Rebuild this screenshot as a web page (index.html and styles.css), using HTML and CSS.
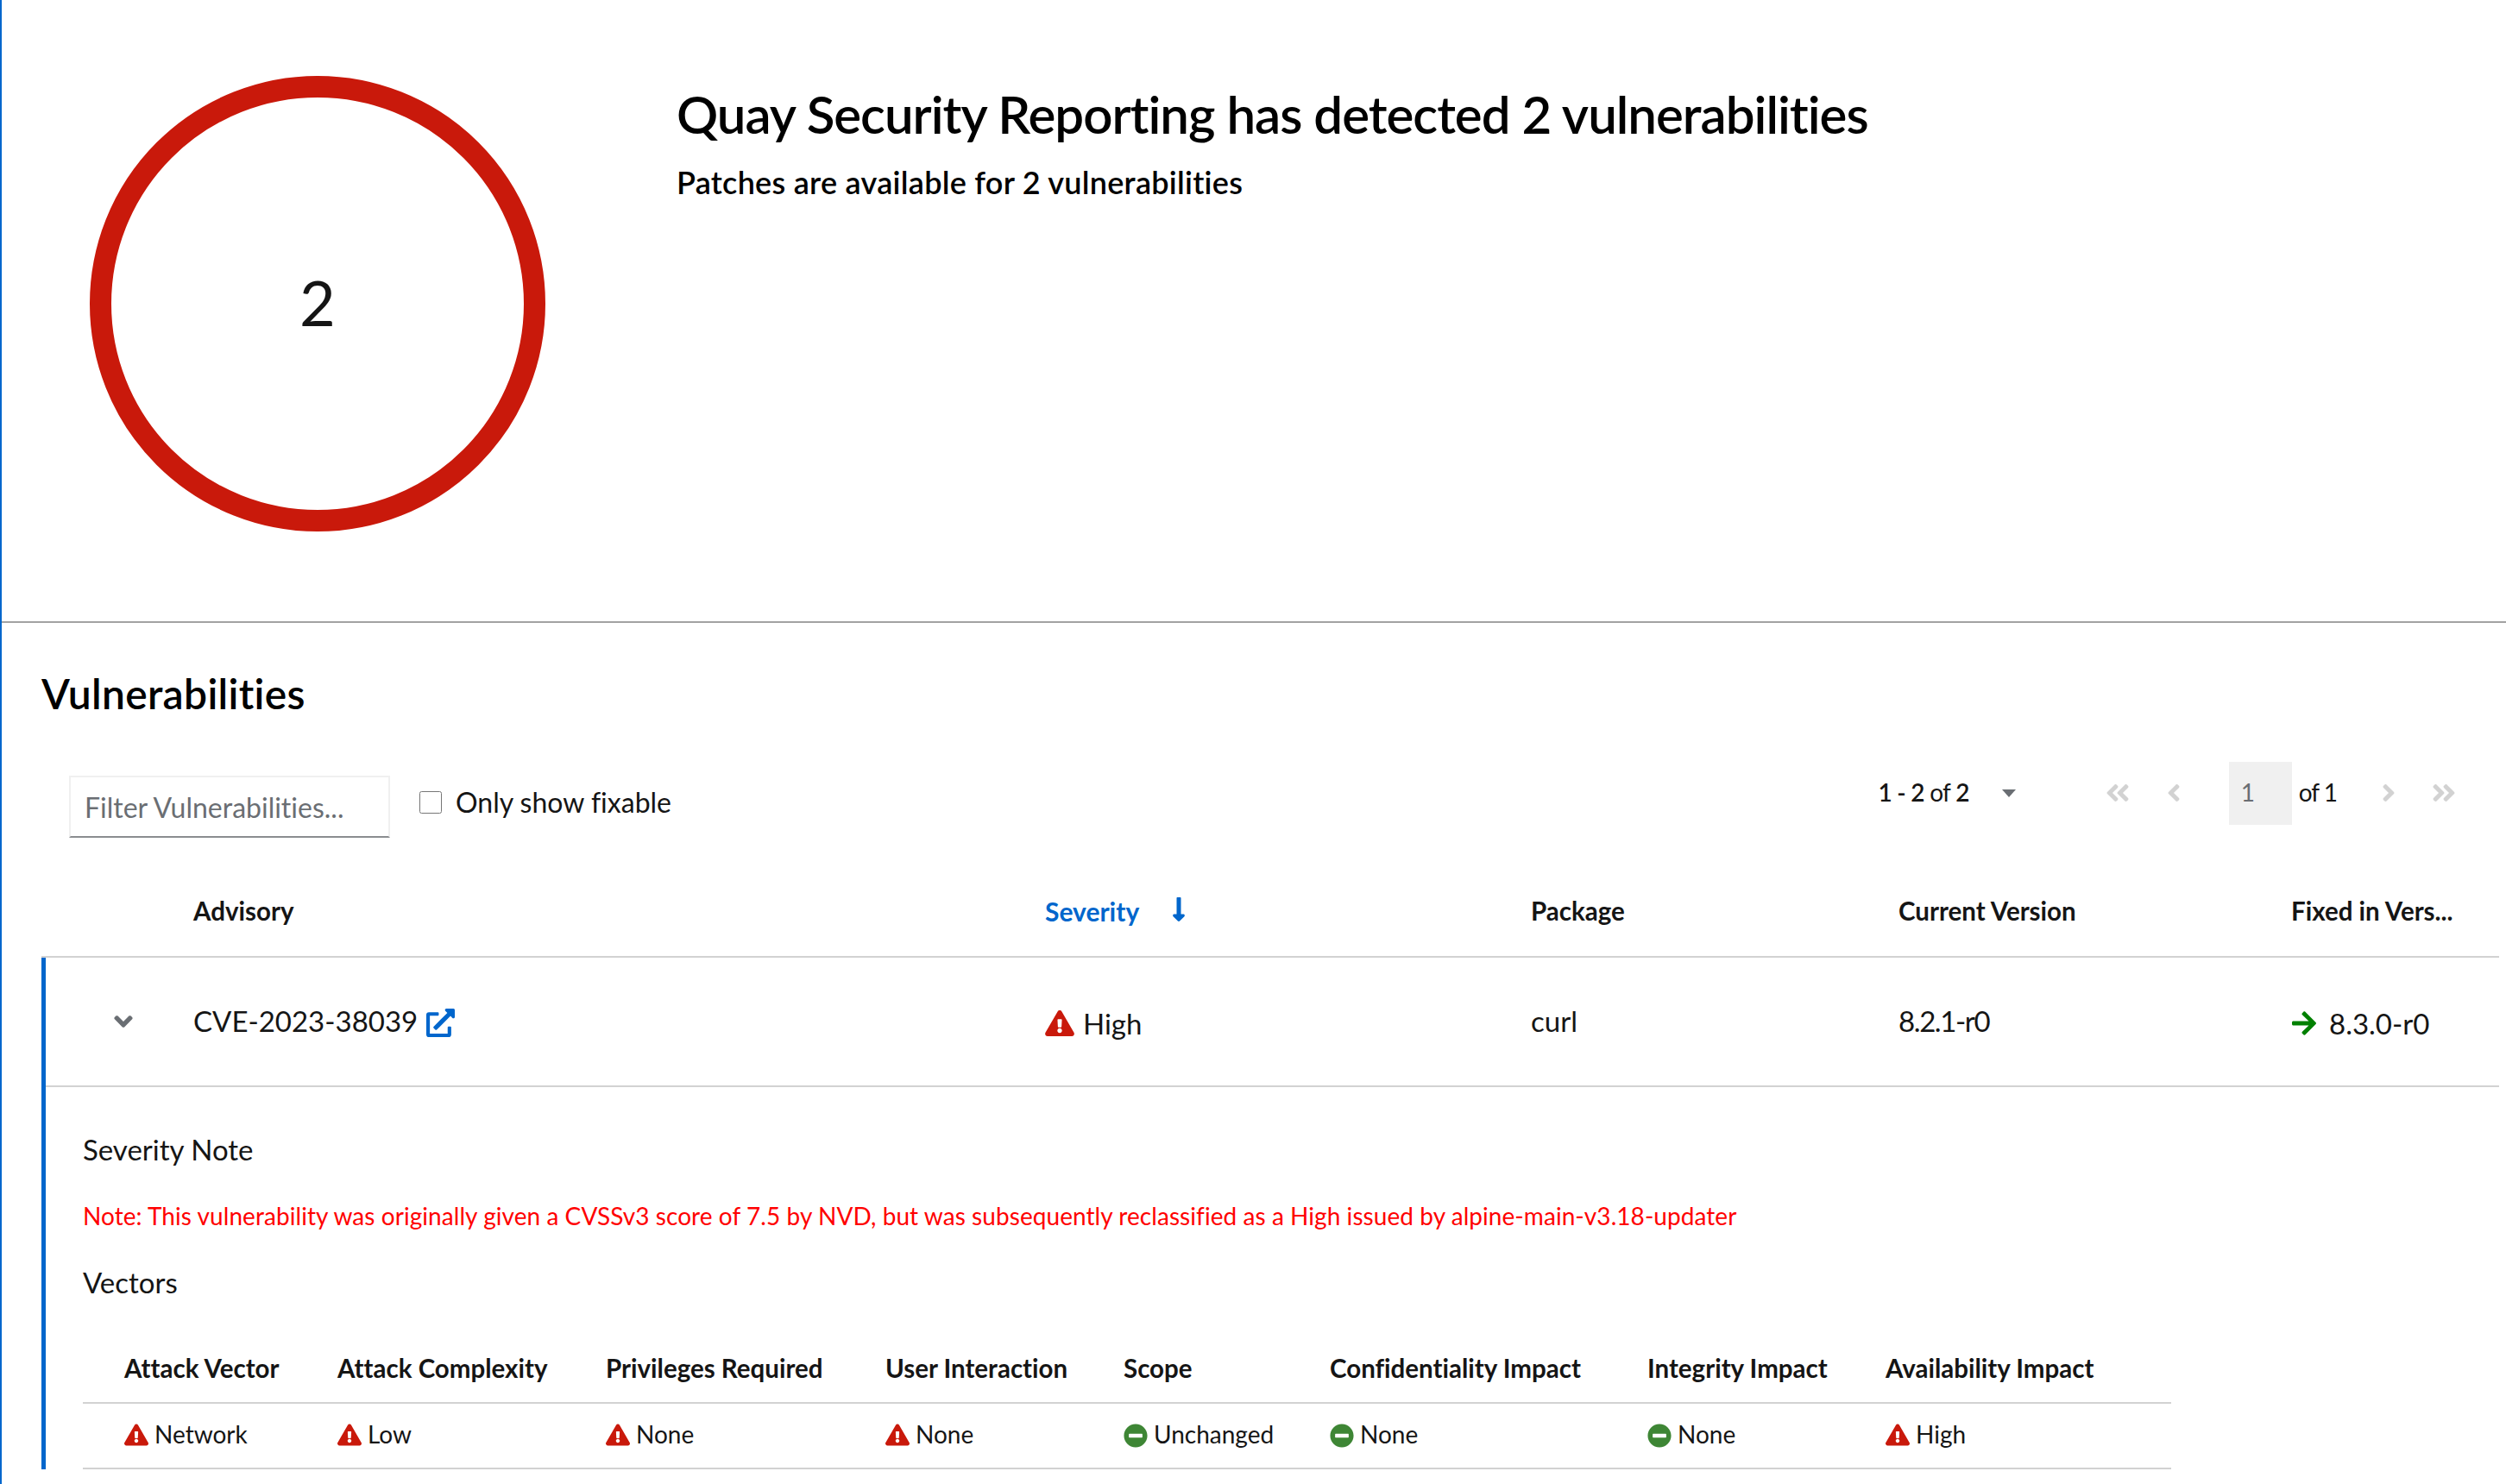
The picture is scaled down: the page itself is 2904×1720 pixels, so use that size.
FILE: index.html
```html
<!DOCTYPE html>
<html lang="en">
<head>
    <meta charset="UTF-8">
    <title>Quay Security Reporting</title>
    <link rel="stylesheet" href="styles.css">
</head>
<body>
    <svg class="icon-defs" aria-hidden="true">
        <symbol id="i-warn" viewBox="0 0 576 512"><path d="M569.517 440.013C587.975 472.007 564.806 512 527.94 512H48.054c-36.937 0-59.999-40.055-41.577-71.987L246.423 24.028c18.467-32.009 64.72-31.951 83.154 0l239.94 416zM288 354c-25.405 0-46 20.595-46 46s20.595 46 46 46 46-20.595 46-46-20.595-46-46-46zm-43.673-165.346l7.418 136c.347 6.364 5.609 11.346 11.982 11.346h48.546c6.373 0 11.635-4.982 11.982-11.346l7.418-136c.375-6.874-5.098-12.654-11.982-12.654h-63.383c-6.884 0-12.356 5.78-11.981 12.654z"/></symbol>
        <symbol id="i-minus" viewBox="0 0 512 512"><path d="M256 8C119 8 8 119 8 256s111 248 248 248 248-111 248-248S393 8 256 8zM124 296c-6.6 0-12-5.4-12-12v-56c0-6.6 5.4-12 12-12h264c6.6 0 12 5.4 12 12v56c0 6.6-5.4 12-12 12H124z"/></symbol>
        <symbol id="i-double" viewBox="0 0 448 512"><path d="M223.7 239l136-136c9.4-9.4 24.6-9.4 33.9 0l22.6 22.6c9.4 9.4 9.4 24.6 0 33.9L319.9 256l96.4 96.4c9.4 9.4 9.4 24.6 0 33.9L393.7 409c-9.4 9.4-24.6 9.4-33.9 0l-136-136c-9.5-9.4-9.5-24.6-.1-34zm-192 34l136 136c9.4 9.4 24.6 9.4 33.9 0l22.6-22.6c9.4-9.4 9.4-24.6 0-33.9L127.9 256l96.4-96.4c9.4-9.4 9.4-24.6 0-33.9L201.7 103c-9.4-9.4-24.6-9.4-33.9 0l-136 136c-9.5 9.4-9.5 24.6-.1 34z"/></symbol>
        <symbol id="i-single" viewBox="0 0 256 512"><path d="M31.7 239l136-136c9.4-9.4 24.6-9.4 33.9 0l22.6 22.6c9.4 9.4 9.4 24.6 0 33.9L127.9 256l96.4 96.4c9.4 9.4 9.4 24.6 0 33.9L201.7 409c-9.4 9.4-24.6 9.4-33.9 0l-136-136c-9.5-9.4-9.5-24.6-.1-34z"/></symbol>
    </svg>

    <section class="summary">
        <div class="donut">
            <svg viewBox="0 0 528 528" width="528" height="528"><circle cx="264" cy="264" r="251.5" fill="none" stroke="#c9190b" stroke-width="25"/></svg>
            <span class="donut-count">2</span>
        </div>
        <div class="summary-text">
            <h1>Quay Security Reporting has detected 2 vulnerabilities</h1>
            <h2>Patches are available for 2 vulnerabilities</h2>
        </div>
    </section>

    <section class="vulns">
        <h3 class="vulns-title">Vulnerabilities</h3>

        <div class="toolbar">
            <input class="filter" type="text" placeholder="Filter Vulnerabilities...">
            <label class="fixable"><input type="checkbox"><span>Only show fixable</span></label>
            <div class="pager">
                <span class="pager-count"><b>1 - 2</b> of <b>2</b></span>
                <span class="caret"></span>
                <svg class="pg-icon pg-first"><use href="#i-double"/></svg>
                <svg class="pg-icon pg-prev"><use href="#i-single"/></svg>
                <span class="pg-input">1</span>
                <span class="pg-of">of 1</span>
                <svg class="pg-icon pg-next flip"><use href="#i-single"/></svg>
                <svg class="pg-icon pg-last flip"><use href="#i-double"/></svg>
            </div>
        </div>

        <div class="row head">
            <div></div>
            <div>Advisory</div>
            <div class="sorted">Severity
                <svg class="sort-icon" viewBox="0 0 256 512"><path d="M168 345.941V44c0-6.627-5.373-12-12-12h-56c-6.627 0-12 5.373-12 12v301.941H41.941c-21.382 0-32.09 25.851-16.971 40.971l86.059 86.059c9.373 9.373 24.569 9.373 33.941 0l86.059-86.059c15.119-15.119 4.411-40.971-16.971-40.971H168z"/></svg>
            </div>
            <div>Package</div>
            <div>Current Version</div>
            <div>Fixed in Vers...</div>
        </div>

        <div class="expanded">
            <div class="row item">
                <div class="toggle">
                    <svg viewBox="0 0 320 512"><path d="M143 352.3L7 216.3c-9.4-9.4-9.4-24.6 0-33.9l22.6-22.6c9.4-9.4 24.6-9.4 33.9 0l96.4 96.4 96.4-96.4c9.4-9.4 24.6-9.4 33.9 0l22.6 22.6c9.4 9.4 9.4 24.6 0 33.9l-136 136c-9.2 9.4-24.4 9.4-33.8 0z"/></svg>
                </div>
                <div class="advisory">CVE-2023-38039
                    <svg class="ext-link" viewBox="0 0 512 512"><path d="M432,320H400a16,16,0,0,0-16,16V448H64V128H208a16,16,0,0,0,16-16V80a16,16,0,0,0-16-16H48A48,48,0,0,0,0,112V464a48,48,0,0,0,48,48H400a48,48,0,0,0,48-48V336A16,16,0,0,0,432,320ZM488,0h-128c-21.37,0-32.05,25.91-17,41l35.73,35.73L135,320.37a24,24,0,0,0,0,34L157.67,377a24,24,0,0,0,34,0L435.28,133.32,471,169c15,15,41,4.5,41-17V24A24,24,0,0,0,488,0Z"/></svg>
                </div>
                <div class="with-icon"><svg class="sev-icon red"><use href="#i-warn"/></svg>High</div>
                <div>curl</div>
                <div class="current-ver">8.2.1-r0</div>
                <div class="with-icon fixed">
                    <svg class="fix-arrow" viewBox="0 0 448 512"><path d="M190.5 66.9l22.2-22.2c9.4-9.4 24.6-9.4 33.9 0L441 239c9.4 9.4 9.4 24.6 0 33.9L246.6 467.3c-9.4 9.4-24.6 9.4-33.9 0l-22.2-22.2c-9.5-9.5-9.3-25 .4-34.3L311.4 296H24c-13.3 0-24-10.7-24-24v-32c0-13.3 10.7-24 24-24h287.4L190.9 101.2c-9.8-9.3-10-24.8-.4-34.3z"/></svg>8.3.0-r0
                </div>
            </div>

            <div class="detail">
                <p class="detail-title">Severity Note</p>
                <p class="note">Note: This vulnerability was originally given a CVSSv3 score of 7.5 by NVD, but was subsequently reclassified as a High issued by alpine-main-v3.18-updater</p>
                <p class="detail-title vectors-title">Vectors</p>
                <table class="vectors">
                    <colgroup>
                        <col class="c1"><col class="c2"><col class="c3"><col class="c4"><col class="c5"><col class="c6"><col class="c7"><col class="c8">
                    </colgroup>
                    <thead>
                        <tr>
                            <th>Attack Vector</th><th>Attack Complexity</th><th>Privileges Required</th><th>User Interaction</th><th>Scope</th><th>Confidentiality Impact</th><th>Integrity Impact</th><th>Availability Impact</th>
                        </tr>
                    </thead>
                    <tbody>
                        <tr>
                            <td><svg class="vec-icon red"><use href="#i-warn"/></svg>Network</td>
                            <td><svg class="vec-icon red"><use href="#i-warn"/></svg>Low</td>
                            <td><svg class="vec-icon red"><use href="#i-warn"/></svg>None</td>
                            <td><svg class="vec-icon red"><use href="#i-warn"/></svg>None</td>
                            <td><svg class="vec-icon green"><use href="#i-minus"/></svg>Unchanged</td>
                            <td><svg class="vec-icon green"><use href="#i-minus"/></svg>None</td>
                            <td><svg class="vec-icon green"><use href="#i-minus"/></svg>None</td>
                            <td><svg class="vec-icon red"><use href="#i-warn"/></svg>High</td>
                        </tr>
                    </tbody>
                </table>
            </div>
        </div>
    </section>
</body>
</html>
```

FILE: styles.css
```css
html, body {
    height: 100%;
    margin: 0;
}
body {
    font-family: Lato, "Noto Sans", sans-serif;
    font-size: 28px;
    font-variant-ligatures: none;
    color: #151515;
    background: #fff;
    border-left: 2px solid #06c;
    overflow: hidden;
}
.icon-defs { display: none; }

/* top summary */
.summary {
    display: flex;
    height: 722px;
    box-sizing: border-box;
    padding: 88px 0 0 102px;
    border-bottom: 2px solid #a2a2a2;
}
.donut {
    position: relative;
    width: 528px;
    height: 528px;
}
.donut-count {
    position: absolute;
    inset: 0 0 4px;
    display: flex;
    align-items: center;
    justify-content: center;
    font-size: 72px;
}
.summary-text { margin-left: 152px; }
.summary-text h1 {
    margin: 0;
    padding-top: 8px;
    font-size: 60px;
    line-height: 72px;
    font-weight: 600;
    letter-spacing: -1px;
    color: #000;
}
.summary-text h2 {
    margin: 19px 0 0;
    font-size: 36px;
    line-height: 48px;
    font-weight: 600;
    letter-spacing: 0.27px;
    color: #000;
}

/* vulnerabilities */
.vulns { padding: 0 8px 0 46px; }
.vulns-title {
    margin: 0;
    padding-top: 54px;
    font-size: 48px;
    line-height: 56px;
    font-weight: 600;
    letter-spacing: 0.3px;
    color: #000;
}
.toolbar {
    display: flex;
    align-items: flex-start;
    padding: 51px 0 0 32px;
    height: 88px;
}
.filter {
    width: 372px;
    height: 72px;
    box-sizing: border-box;
    margin-top: 16px;
    padding: 0 16px;
    font: inherit;
    font-size: 32px;
    border: 2px solid #f0f0f0;
    border-bottom-color: #8a8d90;
}
.filter::placeholder { color: #6a6e73; opacity: 1; }
.fixable {
    display: flex;
    align-items: center;
    gap: 16px;
    margin: 26px 0 0 34px;
    font-size: 32px;
    line-height: 42px;
}
.fixable input {
    width: 26px;
    height: 26px;
    margin: 0;
}
.pager {
    display: flex;
    align-items: center;
    height: 73px;
    margin-left: auto;
    padding-right: 50px;
}
.pager-count {
    margin-top: -3px;
    letter-spacing: -0.7px;
}
.pager-count b { font-weight: 600; }
.caret {
    width: 0;
    height: 0;
    margin: 0 104px 0 38px;
    border-left: 8px solid transparent;
    border-right: 8px solid transparent;
    border-top: 9px solid #6a6e73;
}
.pg-icon {
    height: 32px;
    fill: #d2d2d2;
    margin-top: -2px;
}
.pg-first { width: 28px; }
.pg-prev { width: 16px; margin-left: 43px; }
.pg-next { width: 16px; margin-left: 52px; }
.pg-last { width: 28px; margin-left: 42px; }
.flip { transform: scaleX(-1); }
.pg-input {
    box-sizing: border-box;
    width: 73px;
    height: 73px;
    margin-left: 56px;
    padding-left: 14px;
    line-height: 70px;
    background: #f0f0f0;
    color: #6a6e73;
}
.pg-of {
    margin: -3px 0 0 8px;
    letter-spacing: -1px;
}

/* vulnerability rows share these columns */
.row {
    display: grid;
    grid-template-columns: 176px 987px 563px 426px 455px 241px;
    align-items: center;
}
.head {
    height: 139px;
    box-sizing: border-box;
    padding-top: 32px;
    font-size: 29.5px;
    font-weight: 700;
    border-bottom: 2px solid #d2d2d2;
}
.sorted {
    display: flex;
    align-items: center;
    gap: 38px;
    font-size: 30px;
    color: #06c;
}
.sort-icon {
    width: 16px;
    height: 32px;
    fill: #06c;
    margin-top: -4px;
}
.expanded { border-left: 5px solid #06c; }
.item {
    grid-template-columns: 171px 987px 563px 426px 455px 241px;
    height: 150px;
    box-sizing: border-box;
    padding-bottom: 3px;
    border-bottom: 2px solid #d2d2d2;
    font-size: 33px;
}
.toggle {
    display: flex;
    justify-content: center;
    padding: 3px 0 0 9px;
}
.toggle svg {
    width: 22px;
    height: 34px;
    fill: #6a6e73;
}
.advisory {
    display: flex;
    align-items: center;
    gap: 10px;
}
.ext-link {
    width: 33px;
    height: 33px;
    fill: #06c;
    margin-top: 6px;
}
.current-ver { letter-spacing: -1.4px; }
.with-icon {
    display: flex;
    align-items: center;
    margin-top: 6px;
}
.sev-icon {
    width: 34px;
    height: 30px;
    margin-right: 10px;
}
.red { fill: #c9190b; }
.green { fill: #3e8635; }
.fix-arrow {
    width: 30px;
    height: 32px;
    fill: #008000;
    margin-right: 14px;
}

/* expanded detail */
.detail { padding: 52px 0 0 43px; }
.detail p { margin: 0; }
.detail-title {
    font-size: 33px;
    line-height: 40px;
}
.note {
    padding-top: 37px;
    line-height: 40px;
    letter-spacing: 0.06px;
    color: #f00;
}
.vectors-title { padding-top: 37px; }
.vectors {
    width: 2420px;
    margin-top: 40px;
    border-collapse: collapse;
    table-layout: fixed;
}
.vectors th {
    height: 79px;
    padding: 0 0 0 48px;
    text-align: left;
    font-size: 29.5px;
    font-weight: 700;
    border-bottom: 2px solid #d2d2d2;
}
.vectors td {
    height: 76px;
    padding: 0 0 4px 48px;
    box-sizing: border-box;
    border-bottom: 2px solid #d2d2d2;
}
.c1 { width: 247px; }
.c2 { width: 311px; }
.c3 { width: 324px; }
.c4 { width: 276px; }
.c5 { width: 239px; }
.c6 { width: 368px; }
.c7 { width: 276px; }
.vec-icon {
    width: 28px;
    height: 26px;
    margin-right: 7px;
    vertical-align: -3px;
}
.vec-icon.green {
    height: 28px;
    vertical-align: -5px;
}
```
